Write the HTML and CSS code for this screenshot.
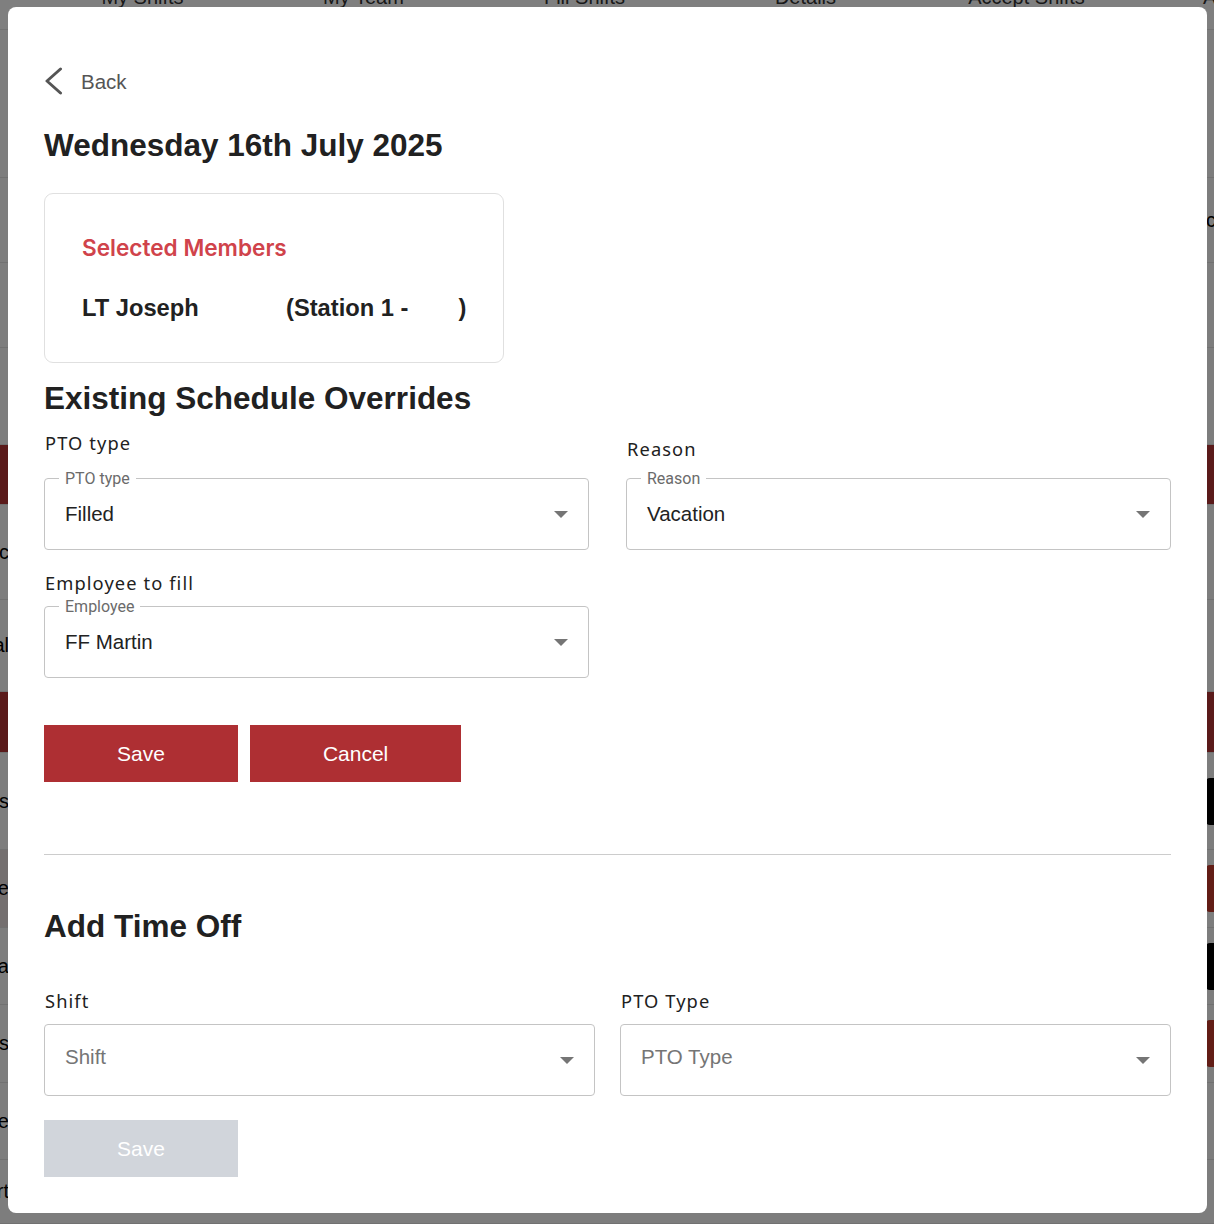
FILE: index.html
```html
<!DOCTYPE html>
<html lang="en">
<head>
<meta charset="utf-8">
<title>Schedule override</title>
<link rel="stylesheet" href="styles.css">
</head>
<body>
<div class="page">
  <nav class="tabs">
    <span class="tab">My Shifts</span>
    <span class="tab">My Team</span>
    <span class="tab">Fill Shifts</span>
    <span class="tab">Details</span>
    <span class="tab">Accept Shifts</span>
    <span class="tab">Approvals</span>
  </nav>
  <div class="row"></div>
  <div class="row"><span class="lead"></span><span class="tail"><span class="tail-text">cover</span></span></div>
  <div class="row"></div>
  <div class="row"></div>
  <div class="row band"></div>
  <div class="row"><span class="lead">Sync</span><span class="tail"></span></div>
  <div class="row"><span class="lead">Cal</span><span class="tail"></span></div>
  <div class="row band"></div>
  <div class="row"><span class="lead">Posts</span><span class="tail"><span class="badge dark"></span></span></div>
  <div class="row"><span class="lead lead-tint">Trade</span><span class="tail"><span class="badge red"></span></span></div>
  <div class="row"><span class="lead">Vaca</span><span class="tail"><span class="badge dark"></span></span></div>
  <div class="row"><span class="lead">Sicks</span><span class="tail"><span class="badge red"></span></span></div>
  <div class="row"><span class="lead">Leave</span><span class="tail"></span></div>
  <div class="row"><span class="lead">Short</span><span class="tail"></span></div>
</div>

<div class="overlay"></div>

<div class="modal">
  <div class="back">
    <svg class="back-icon" width="20" height="28" viewBox="0 0 20 28" aria-hidden="true">
      <polyline points="16.5,2 3,14 16.5,26" fill="none" stroke="#555" stroke-width="3" stroke-linecap="round" stroke-linejoin="round"/>
    </svg>
    <span class="back-text">Back</span>
  </div>

  <h1 class="title">Wednesday 16th July 2025</h1>

  <div class="card">
    <div class="card-title">Selected Members</div>
    <div class="member">
      <span class="member-name">LT Joseph</span>
      <span class="member-station">(Station 1 -<span class="station-blank"></span>)</span>
    </div>
  </div>

  <h2 class="section-title">Existing Schedule Overrides</h2>

  <div class="grid grid-top">
    <div class="field">
      <div class="field-label gap-lg">PTO type</div>
      <div class="select">
        <span class="legend">PTO type</span>
        <span class="value">Filled</span>
        <span class="caret"></span>
      </div>
    </div>
    <div class="field">
      <div class="field-label gap-md">Reason</div>
      <div class="select">
        <span class="legend">Reason</span>
        <span class="value">Vacation</span>
        <span class="caret"></span>
      </div>
    </div>
    <div class="field field-second">
      <div class="field-label gap-sm">Employee to fill</div>
      <div class="select">
        <span class="legend">Employee</span>
        <span class="value">FF Martin</span>
        <span class="caret"></span>
      </div>
    </div>
  </div>

  <div class="actions">
    <button class="btn">Save</button>
    <button class="btn">Cancel</button>
  </div>

  <hr class="divider">

  <h2 class="section-title add-title">Add Time Off</h2>

  <div class="grid grid-bottom">
    <div class="field">
      <div class="field-label gap-sm">Shift</div>
      <div class="select">
        <span class="value placeholder">Shift</span>
        <span class="caret caret-low"></span>
      </div>
    </div>
    <div class="field">
      <div class="field-label gap-sm">PTO Type</div>
      <div class="select">
        <span class="value placeholder">PTO Type</span>
        <span class="caret caret-low"></span>
      </div>
    </div>
  </div>

  <button class="btn btn-disabled" disabled>Save</button>
</div>
</body>
</html>
```

FILE: styles.css
```css
html, body {
  margin: 0;
  padding: 0;
  height: 100%;
  overflow: hidden;
}

body {
  font-family: "Liberation Sans", Arial, sans-serif;
  background: #fff;
}

/* ---------- background page ---------- */
.page {
  height: 100vh;
  display: grid;
  grid-template-rows: 30px 148px 85px 85px 97px 60px 95px 92px 61px 97px 78px 77px 78px 77px 1fr;
}

.tabs {
  display: flex;
  padding-left: 32px;
  overflow: hidden;
  white-space: nowrap;
  border-bottom: 1px solid #e6e6e6;
  background: #fff;
}

.tab {
  flex: 0 0 221px;
  text-align: center;
  font-size: 20px;
  line-height: 20px;
  margin-top: -13px;
  color: #333;
}

.row {
  display: flex;
  align-items: center;
  justify-content: space-between;
  border-bottom: 1px solid #e2e2e2;
  background: #fafafa;
  overflow: hidden;
}

.row.band {
  background: #b53434;
}

.lead {
  width: 9px;
  display: flex;
  justify-content: flex-end;
  overflow: hidden;
  white-space: nowrap;
  font-size: 20px;
  color: #000;
  align-self: stretch;
  align-items: center;
}

.lead-tint {
  background: #e9dede;
}

.tail {
  width: 8px;
  overflow: hidden;
  white-space: nowrap;
  display: flex;
  align-items: center;
}

.tail-text {
  font-size: 20px;
  color: #000;
}

.badge {
  flex: 0 0 60px;
  height: 47px;
  border-radius: 4px;
}

.badge.dark { background: #000; }
.badge.red { background: #c43a2d; }

.overlay {
  position: fixed;
  inset: 0;
  background: rgba(0, 0, 0, 0.5);
}

/* ---------- modal ---------- */
.modal {
  position: fixed;
  top: 7px;
  left: 8px;
  right: 7px;
  bottom: 11px;
  box-sizing: border-box;
  background: #fff;
  border-radius: 8px;
  padding: 60px 36px 0;
  color: #212121;
}

.back {
  display: flex;
  align-items: center;
  height: 28px;
  gap: 17px;
}

.back-icon {
  display: block;
}

.back-text {
  font-size: 20.5px;
  color: #555;
  line-height: 28px;
  padding-top: 2px;
}

.title {
  margin: 32px 0 0;
  font-size: 31.5px;
  line-height: 36px;
  font-weight: 700;
  color: #212121;
}

.card {
  margin-top: 30px;
  width: 460px;
  box-sizing: border-box;
  border: 1px solid #e0e0e0;
  border-radius: 9px;
  padding: 40px 36px 40px 37px;
}

.card-title {
  font-family: Inter, "Liberation Sans", sans-serif;
  font-weight: 600;
  font-size: 22.6px;
  line-height: 28px;
  color: #d0434b;
}

.member {
  display: flex;
  margin-top: 32px;
  font-size: 23.7px;
  line-height: 28px;
  font-weight: 700;
  color: #212121;
  white-space: nowrap;
}

.member-name {
  width: 204px;
}

.station-blank {
  display: inline-block;
  width: 50px;
}

.section-title {
  margin: 17px 0 0;
  font-size: 31.5px;
  line-height: 36px;
  font-weight: 700;
  color: #212121;
}

.grid {
  display: grid;
}

.grid-top {
  margin-top: 15px;
  grid-template-columns: 545px 545px;
  column-gap: 37px;
  align-items: end;
}

.grid-bottom {
  margin-top: 45px;
  grid-template-columns: 551px 551px;
  column-gap: 25px;
}

.field-second {
  grid-column: 1;
  margin-top: 21px;
}

.field-label {
  font-family: "Noto Sans", sans-serif;
  font-size: 18.3px;
  line-height: 24px;
  letter-spacing: 1.1px;
  padding-left: 1px;
  color: #212121;
}

.gap-lg { margin-bottom: 23px; }
.gap-md { margin-bottom: 17px; }
.gap-sm { margin-bottom: 11px; }

.select {
  position: relative;
  height: 72px;
  box-sizing: border-box;
  border: 1px solid #c4c4c4;
  border-radius: 4px;
  display: flex;
  align-items: center;
  justify-content: space-between;
  padding: 0 20px 0 20px;
  font-family: "Liberation Sans", Arial, sans-serif;
}

.legend {
  position: absolute;
  left: 14px;
  top: -9px;
  padding: 0 6px;
  background: #fff;
  font-family: Roboto, "Liberation Sans", sans-serif;
  font-size: 16px;
  line-height: 18px;
  color: #6b6b6b;
}

.value {
  font-size: 20.5px;
  color: #222;
}

.value.placeholder {
  color: #757575;
  margin-top: -6px;
}

.caret {
  width: 0;
  height: 0;
  border-left: 7.5px solid transparent;
  border-right: 7.5px solid transparent;
  border-top: 7px solid #757575;
}

.caret-low {
  margin-top: 1px;
}

.actions {
  display: flex;
  gap: 12px;
  margin-top: 47px;
}

.btn {
  height: 57px;
  padding: 0 73px;
  border: none;
  border-radius: 0;
  background: #ae2f33;
  color: #fff;
  font-family: "Liberation Sans", Arial, sans-serif;
  font-size: 21px;
}

.btn-disabled {
  margin-top: 24px;
  background: #d1d5db;
  color: #fff;
}

.divider {
  margin: 72px 0 0;
  border: none;
  border-top: 1px solid #cccccc;
  height: 0;
}

.add-title {
  margin-top: 53px;
}
```
